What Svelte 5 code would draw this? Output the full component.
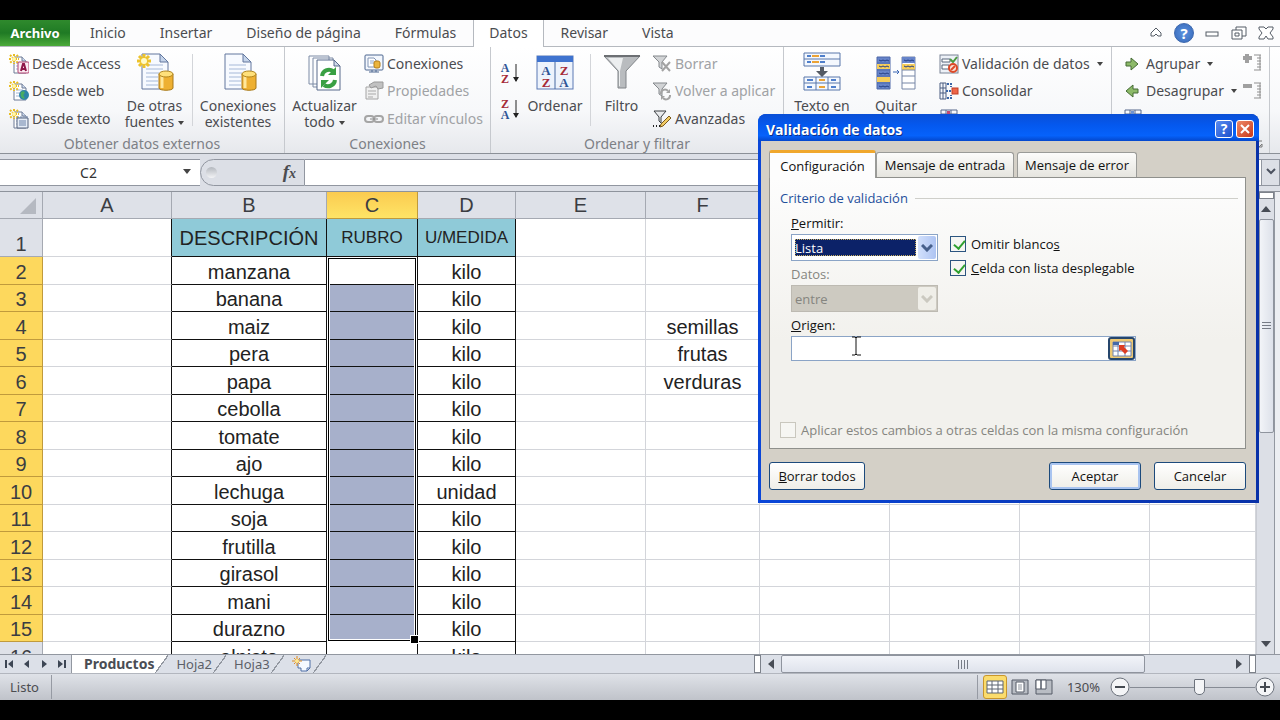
<script lang="ts">
	type Command = { icon: string; label?: string; hint?: string; menu?: boolean; disabled?: boolean };

	const external: Command[] = [
		{ icon: 'access', label: 'Desde Access' },
		{ icon: 'web', label: 'Desde web' },
		{ icon: 'text', label: 'Desde texto' }
	];
	const connections: Command[] = [
		{ icon: 'connections', label: 'Conexiones' },
		{ icon: 'properties', label: 'Propiedades', disabled: true },
		{ icon: 'links', label: 'Editar vínculos', disabled: true }
	];
	const filters: Command[] = [
		{ icon: 'clear', label: 'Borrar', disabled: true },
		{ icon: 'reapply', label: 'Volver a aplicar', disabled: true },
		{ icon: 'advanced', label: 'Avanzadas' }
	];
	const tools: Command[] = [
		{ icon: 'validation', label: 'Validación de datos', menu: true },
		{ icon: 'consolidate', label: 'Consolidar' },
		{ icon: 'whatif', hint: 'Análisis Y si' }
	];
	const outline: Command[] = [
		{ icon: 'group', label: 'Agrupar', menu: true },
		{ icon: 'ungroup', label: 'Desagrupar', menu: true },
		{ icon: 'subtotal', hint: 'Subtotal' }
	];

	const tabs = ['Inicio', 'Insertar', 'Diseño de página', 'Fórmulas', 'Datos', 'Revisar', 'Vista'];
	const columns = ['A', 'B', 'C', 'D', 'E', 'F', 'G', 'H', 'I', 'J'];
	const products = [
		'manzana', 'banana', 'maiz', 'pera', 'papa', 'cebolla', 'tomate', 'ajo',
		'lechuga', 'soja', 'frutilla', 'girasol', 'mani', 'durazno', 'alpiste'
	];
	const lookup: Record<number, string> = { 4: 'semillas', 5: 'frutas', 6: 'verduras' };

	let activeTab = $state('Datos');
	let allow = $state('Lista');
	let source = $state('');
	let ignoreBlank = $state(true);
	let dropdown = $state(true);
	let open = $state(true);

	const rows = products.map((name, i) => ({
		number: i + 2,
		name,
		unit: name === 'lechuga' ? 'unidad' : 'kilo',
		category: lookup[i + 2] ?? ''
	}));
</script>

{#snippet funnel()}
	<path d="M1 2h14l-5 6v7l-3-2V8z" fill="#d2d4d6" stroke="#85898d" />
{/snippet}

{#snippet star()}
	<path d="M5 0v10M0 5h10M1 1l8 8M9 1l-8 8" stroke="#e9bd22" stroke-width="2" stroke-dasharray="2 1" />
	<circle cx="5" cy="5" r="2" fill="#fff6a8" />
{/snippet}

{#snippet page()}
	<path d="M5 3h8l4 4v12H5z" fill="#fff" stroke="#6d7a95" />
	<path d="M7 9h7M7 12h7M7 15h7" stroke="#9fb4d6" />
	<path d="M13 3v4h4" fill="#cfdcf0" stroke="#6d7a95" />
{/snippet}

{#snippet small(name: string)}
	<svg viewBox="0 0 20 20" width="20" height="20" fill="none" aria-hidden="true">
		{#if name === 'access'}
			{@render page()}{@render star()}
			<rect x="9" y="8" width="11" height="11" rx="1" fill="#fbeaf2" stroke="#b0416f" />
			<path d="M12 17l2-7h1l2 7M12 15h5" stroke="#8f1648" stroke-width="2" />
		{:else if name === 'web'}
			{@render page()}{@render star()}
			<circle cx="15" cy="14" r="5" fill="#2e83a8" />
			<path d="M12 11c3-2 5 0 3 2s2 3 0 5c-3-1-4-4-3-7z" fill="#48ac62" />
		{:else if name === 'text'}
			{@render page()}{@render star()}
			<path d="M8 9h11v10H8z" fill="#e5ecf6" stroke="#56657f" />
			<path d="M9 9v-2M12 9v-2M15 9v-2M18 9v-2M10 12h7M10 14h7M10 16h7" stroke="#6d83a8" />
		{:else if name === 'connections'}
			<rect x="1" y="1" width="18" height="15" rx="1" fill="#f3f7fd" stroke="#4d6690" />
			<path d="M4 4h6l2 2v7H4z" fill="#fff" stroke="#8295b5" />
			<path d="M6 7h4M6 9h4" stroke="#8da7d0" />
			<rect x="10" y="7" width="6" height="7" rx="2" fill="#eab43d" stroke="#b47d18" />
			<path d="M5 18h10M8 16v2M12 16v2" stroke="#4d6690" />
		{:else if name === 'properties'}
			<path d="M2 6h12v12H2z" fill="#f0f0f0" stroke="#a4a4a4" />
			<path d="M4 10h8M4 13h8M4 16h5" stroke="#a9a9a9" />
			<path d="M5 4l5-3h9v6l-5 1-2-3-5 2z" fill="#c1c1c1" stroke="#999" />
		{:else if name === 'links'}
			<rect x="1" y="7" width="9" height="6" rx="3" stroke="#a5a5a5" stroke-width="2" />
			<rect x="10" y="7" width="9" height="6" rx="3" stroke="#a5a5a5" stroke-width="2" />
			<path d="M6 10h8" stroke="#888" />
		{:else if name === 'clear'}
			{@render funnel()}
			<path d="M10 8l8 9M18 8l-8 9" stroke="#a3a3a3" stroke-width="2" />
		{:else if name === 'reapply'}
			{@render funnel()}
			<path d="M9 13a4 4 0 0 1 7-3M18 14a4 4 0 0 1-7 3" stroke="#a3a3a3" stroke-width="2" />
			<path d="M18 8v4h-4zM9 19v-4h4z" fill="#a3a3a3" />
		{:else if name === 'advanced'}
			<path d="M2 2h12L9 8v6l-2-2V8z" fill="#e8eaec" stroke="#3b3e42" />
			<path d="M17 7l2 2-8 8-3 1 1-3z" fill="#f2cb63" stroke="#7a5a1c" />
			<path d="M1 17h7" stroke="#222" stroke-dasharray="1 2" stroke-width="2" />
		{:else if name === 'validation'}
			<rect x="1" y="1" width="18" height="18" fill="#edf1f7" stroke="#7b8496" />
			<path d="M3 5h8v3H3zM3 11h7v4H3z" fill="#fff" stroke="#59667d" />
			<path d="M11 5l3 3 4-5" stroke="#4c9a40" stroke-width="2" />
			<circle cx="14" cy="14" r="4" fill="#fbe0d7" stroke="#dc4a28" stroke-width="2" />
			<path d="M12 16l4-4" stroke="#dc4a28" stroke-width="2" />
		{:else if name === 'consolidate'}
			<path d="M1 2h6v16H1zM1 7h6M1 12h6M4 2v16" fill="#f6f8fc" stroke="#4a5c80" />
			<path d="M8 3h4v3M8 17h4v-3M7 10h5" stroke="#3a66a8" stroke-width="2" stroke-dasharray="2 1" />
			<rect x="13" y="7" width="6" height="6" fill="#ed6548" stroke="#c13e26" />
		{:else if name === 'whatif' || name === 'subtotal'}
			<path d="M2 1h16v16H2zM2 5h16M7 1v16M12 1v16" fill="#f6f8fc" stroke="#56688c" />
			<path d="M8 2h3v4H8z" fill={name === 'whatif' ? '#c24972' : '#6f93d0'} />
		{:else if name === 'group'}
			<path d="M3 8h5V4l7 6-7 6v-4H3z" fill="#8cb968" stroke="#446b34" />
		{:else if name === 'ungroup'}
			<path d="M15 8h-5V4l-7 6 7 6v-4h5z" fill="#8cb968" stroke="#446b34" />
		{:else if name === 'expand'}
			<path d="M5 1v9M1 5h9" stroke="#a0a0a0" stroke-width="4" />
			<path d="M12 2h7M15 5h4M15 8h4M15 11h4M15 14h4M12 17h7M18 2v15" stroke="#8f8f8f" />
		{:else if name === 'collapse'}
			<path d="M1 5h9" stroke="#a0a0a0" stroke-width="4" />
			<path d="M12 2h7M15 5h4M15 8h4M15 11h4M15 14h4M12 17h7M18 2v15" stroke="#8f8f8f" />
		{/if}
	</svg>
{/snippet}

{#snippet large(name: string)}
	<svg viewBox="0 0 40 40" width="40" height="40" fill="none" aria-hidden="true">
		{#if name === 'sources' || name === 'existing'}
			<path d="M7 2h18l8 8v27H7z" fill="#f7faff" stroke="#62779e" />
			<path d="M25 2v8h8z" fill="#c5d4ea" stroke="#62779e" />
			<path d="M11 13h17M11 17h17M11 21h13M11 25h12M11 29h12M11 33h12" stroke="#a6b9d8" />
			<path d="M24 22v14c0 3 14 3 14 0V22z" fill="#eeb032" stroke="#a87918" />
			<path d="M27 24v12" stroke="#ffe79b" stroke-width="3" />
			<ellipse cx="31" cy="22" rx="7" ry="3" fill="#ffe07a" stroke="#b3861e" />
			{#if name === 'sources'}
				<path d="M9 2v14M2 9h14M4 4l10 10M14 4L4 14" stroke="#edc32c" stroke-width="3" />
				<circle cx="9" cy="9" r="3" fill="#fffbc8" />
			{/if}
		{:else if name === 'refresh'}
			<path d="M4 4h20v28H4zM8 6h20v29H8z" fill="#fbfcfe" stroke="#7d8ba5" />
			<path d="M12 8h17l6 6v24H12z" fill="#fff" stroke="#586a8c" />
			<path d="M29 8v6h6z" fill="#cfd9ea" stroke="#586a8c" />
			<path d="M17 24a7 7 0 0 1 11-5M30 28a7 7 0 0 1-11 5" stroke="#39a043" stroke-width="4" />
			<path d="M31 15v8h-8zM16 36v-8h8z" fill="#39a043" />
		{:else if name === 'sort'}
			<rect x="2" y="4" width="36" height="33" fill="#edf3fc" stroke="#5a79b4" />
			<rect x="2" y="4" width="36" height="6" fill="#3f73cf" />
			<path d="M20 10v27" stroke="#4668a0" />
			<g class="az" text-anchor="middle" font-size="13">
				<text x="11" y="23" fill="#2f5496">A</text>
				<text x="11" y="35" fill="#a52a37">Z</text>
				<text x="29" y="23" fill="#a52a37">Z</text>
				<text x="29" y="35" fill="#2f5496">A</text>
			</g>
		{:else if name === 'filter'}
			<path d="M2 4h36L24 19v17h-8V19z" fill="#b9bcbf" stroke="#808488" />
			<path d="M6 6h15l-3 13v15h-1V19z" fill="#eceeef" />
			<path d="M2 4h36" stroke="#6c6f73" stroke-width="2" />
		{:else if name === 'split'}
			<path d="M2 1h36v13H2zM2 7h36M2 25h36v13H2zM2 31h36M14 25v13M26 25v13" fill="#f4f8fe" stroke="#5876aa" />
			<path d="M5 4h4M18 4h5M5 10h4M18 10h5M5 28h6M29 28h5M5 35h5M29 35h5" stroke="#4f7fcb" stroke-width="2" />
			<path d="M10 4h7M10 10h7M17 28h6M17 35h6" stroke="#eba336" stroke-width="2" />
			<path d="M18 15h4v4h4l-6 6-6-6h4z" fill="#555b64" />
		{:else if name === 'dedupe'}
			<path d="M1 5h13v32H1z" fill="#6784ca" stroke="#4e68a8" />
			<path d="M1 12h13v5H1zM1 25h13v5H1z" fill="#f6cd5a" />
			<path d="M1 11h13M1 18h13M1 24h13M1 31h13" stroke="#4e68a8" />
			<path d="M3 8l2 1 2-1 2 1 2-1 2 1M3 14l2 1 2-1 2 1 2-1 2 1M3 21l2 1 2-1 2 1 2-1 2 1M3 34l2 1 2-1 2 1 2-1 2 1" stroke="#243f85" />
			<path d="M26 5h13v32H26z" fill="#fff" stroke="#7686a6" />
			<path d="M26 5h13v6H26z" fill="#6784ca" />
			<path d="M26 12h13v6H26z" fill="#f6cd5a" />
			<path d="M26 18h13M26 24h13M26 31h13" stroke="#7686a6" />
			<path d="M28 8l2 1 2-1 2 1 2-1 2 1M28 14l2 1 2-1 2 1 2-1 2 1" stroke="#243f85" />
			<path d="M17 20h6M21 18l2 2-2 2" stroke="#3a66b4" />
		{/if}
	</svg>
{/snippet}

{#snippet sortIcon(top: string, bottom: string)}
	<svg viewBox="0 0 20 24" width="20" height="24" aria-hidden="true">
		<g class="az" text-anchor="middle" font-size="12">
			<text x="5" y="11" fill={top === 'A' ? '#2f5496' : '#a52a37'}>{top}</text>
			<text x="5" y="22" fill={bottom === 'A' ? '#2f5496' : '#a52a37'}>{bottom}</text>
		</g>
		<path d="M16 3v17" stroke="#222" />
		<path d="M13 16h6l-3 5z" fill="#222" />
	</svg>
{/snippet}

{#snippet commands(list: Command[])}
	<div class="stack">
		{#each list as item}
			<button class="small" disabled={item.disabled} aria-label={item.hint}>
				{@render small(item.icon)}
				{#if item.label}<span>{item.label}</span>{/if}
				{#if item.menu}<i class="caret"></i>{/if}
			</button>
		{/each}
	</div>
{/snippet}

{#snippet big(icon: string, first: string, second = '', menu = false)}
	<button class="big {icon}">
		{@render large(icon)}
		<span>{first}</span>
		<span>{second}{#if menu}<i class="caret"></i>{/if}</span>
	</button>
{/snippet}

<main class="excel">
	<nav class="tabs">
		<button class="file">Archivo</button>
		{#each tabs as tab}
			<button class="tab" class:active={tab === activeTab} onclick={() => (activeTab = tab)}>{tab}</button>
		{/each}
		<div class="window-tools">
			<button aria-label="Minimizar la cinta"><svg viewBox="0 0 18 18" width="18" height="18"><path d="M4 9l5-5 5 5v3H11L9 10l-2 2H4z" fill="#fff" stroke="#555c66" /></svg></button>
			<button aria-label="Ayuda" class="help">?</button>
			<button aria-label="Minimizar"><svg viewBox="0 0 18 18" width="18" height="18"><rect x="3" y="8" width="12" height="4" fill="#fff" stroke="#555c66" /></svg></button>
			<button aria-label="Restaurar"><svg viewBox="0 0 18 18" width="18" height="18"><path d="M6 3h10v9H6z" fill="#fff" stroke="#555c66" /><path d="M2 6h10v9H2z" fill="#fff" stroke="#555c66" /><path d="M5 9h4v3H5z" fill="#fff" stroke="#555c66" /></svg></button>
			<button aria-label="Cerrar"><svg viewBox="0 0 18 18" width="18" height="18"><path d="M2 3h5l2 2 2-2h5v2l-3 4 3 4v2h-5l-2-3-2 3H2v-2l3-4-3-4z" fill="#fff" stroke="#555c66" /></svg></button>
		</div>
	</nav>

	<div class="ribbon">
		<section class="group external">
			<div class="content">
				{@render commands(external)}
				{@render big('sources', 'De otras', 'fuentes', true)}
				<hr />
				{@render big('existing', 'Conexiones', 'existentes')}
			</div>
			<h2>Obtener datos externos</h2>
		</section>
		<section class="group links">
			<div class="content">
				{@render big('refresh', 'Actualizar', 'todo', true)}
				{@render commands(connections)}
			</div>
			<h2>Conexiones</h2>
		</section>
		<section class="group sorting">
			<div class="content">
				<div class="sorts">
					<button aria-label="Ordenar de A a Z">{@render sortIcon('A', 'Z')}</button>
					<button aria-label="Ordenar de Z a A">{@render sortIcon('Z', 'A')}</button>
				</div>
				{@render big('sort', 'Ordenar')}
				<hr />
				{@render big('filter', 'Filtro')}
				{@render commands(filters)}
			</div>
			<h2>Ordenar y filtrar</h2>
		</section>
		<section class="group tools">
			<div class="content">
				{@render big('split', 'Texto en')}
				{@render big('dedupe', 'Quitar')}
				{@render commands(tools)}
			</div>
		</section>
		<section class="group outline">
			<div class="content">
				{@render commands(outline)}
				<div class="levels">
					<button aria-label="Mostrar detalle">{@render small('expand')}</button>
					<button aria-label="Ocultar detalle">{@render small('collapse')}</button>
				</div>
			</div>
			<div class="launcher"><svg viewBox="0 0 8 8" width="8" height="8"><path d="M1 7V1h6M4 7h3V4z" fill="none" stroke="#777" /></svg></div>
		</section>
	</div>

	<div class="formula-bar">
		<input class="name-box" aria-label="Cuadro de nombres" value="C2" />
		<button class="names" aria-label="Nombres"><i class="caret"></i></button>
		<div class="fx"><span class="knob"></span><button aria-label="Insertar función">f<sub>x</sub></button></div>
		<input class="formula" aria-label="Barra de fórmulas" />
		<button class="expand" aria-label="Expandir barra"><svg viewBox="0 0 10 8" width="10" height="8"><path d="M1 1l4 4 4-4" fill="none" stroke="#4c5260" stroke-width="2" /></svg></button>
	</div>

	<div class="workspace">
		<div class="sheet">
			<table>
				<colgroup>
					<col class="head" />
					{#each columns as c}<col class="col-{c}" />{/each}
				</colgroup>
				<thead>
					<tr>
						<th class="corner"><svg viewBox="0 0 16 16" width="16" height="16"><path d="M16 0v16H0z" fill="#b5b9c1" /></svg></th>
						{#each columns as c}<th class:picked={c === 'C'}>{c}</th>{/each}
					</tr>
				</thead>
				<tbody>
					<tr class="titles">
						<th>1</th>
						<td class="edge"></td>
						<td class="cell title wide">DESCRIPCIÓN</td>
						<td class="cell title">RUBRO</td>
						<td class="cell title">U/MEDIDA</td>
						<td></td><td></td><td></td><td></td><td></td><td></td>
					</tr>
					{#each rows as row}
						<tr>
							<th class:picked={row.number < 16}>{row.number}</th>
							<td class="edge"></td>
							<td class="cell">{row.name}</td>
							<td class="cell" class:filled={row.number > 2 && row.number < 16}>
								{#if row.number === 2}<div class="selection"></div>{/if}
							</td>
							<td class="cell">{row.unit}</td>
							<td></td>
							<td>{row.category}</td>
							<td></td><td></td><td></td><td></td>
						</tr>
					{/each}
				</tbody>
			</table>
		</div>
		<div class="vscroll">
			<span class="splitter"></span>
			<button aria-label="Arriba"><i class="arrow up"></i></button>
			<div class="thumb"><i></i></div>
			<button aria-label="Abajo"><i class="arrow down"></i></button>
		</div>
	</div>

	<div class="bottom">
		<div class="nav">
			<button aria-label="Primera hoja"><svg viewBox="0 0 10 10" width="10" height="10"><path d="M1 1v8" stroke="#3d4654" stroke-width="2" /><path d="M8 1v8L3 5z" fill="#3d4654" /></svg></button>
			<button aria-label="Hoja anterior"><svg viewBox="0 0 10 10" width="10" height="10"><path d="M7 1v8L2 5z" fill="#3d4654" /></svg></button>
			<button aria-label="Hoja siguiente"><svg viewBox="0 0 10 10" width="10" height="10"><path d="M3 1v8l5-4z" fill="#3d4654" /></svg></button>
			<button aria-label="Última hoja"><svg viewBox="0 0 10 10" width="10" height="10"><path d="M9 1v8" stroke="#3d4654" stroke-width="2" /><path d="M2 1v8l5-4z" fill="#3d4654" /></svg></button>
		</div>
		<button class="sheet-tab current">Productos</button>
		<button class="sheet-tab">Hoja2</button>
		<button class="sheet-tab">Hoja3</button>
		<button class="sheet-tab" aria-label="Insertar hoja">
			<svg viewBox="0 0 20 16" width="20" height="16" fill="none"><path d="M6 4h12v8l-3 3H9v-3H6z" fill="#f5f9ff" stroke="#4f6ea6" /><path d="M18 12h-3v3" stroke="#4f6ea6" /><path d="M5 0v10M0 5h10M2 2l6 6M8 2L2 8" stroke="#e08b1f" /><circle cx="5" cy="5" r="2" fill="#ffe88e" /></svg>
		</button>
		<div class="hscroll">
			<span class="splitter"></span>
			<button aria-label="Izquierda"><i class="arrow left"></i></button>
			<div class="thumb"><i></i></div>
			<button aria-label="Derecha"><i class="arrow right"></i></button>
			<span class="splitter"></span>
		</div>
	</div>

	<footer class="status">
		<span class="ready">Listo</span>
		<div class="views">
			<button class="on" aria-label="Normal"><svg viewBox="0 0 18 14" width="18" height="14"><path d="M1 1h16v12H1zM1 5h16M1 9h16M6 1v12M12 1v12" fill="#fff" stroke="#5d6470" /></svg></button>
			<button aria-label="Diseño de página"><svg viewBox="0 0 18 16" width="18" height="16"><path d="M1 1h16v14H1z" fill="#b9bdc4" stroke="#555b66" /><path d="M5 3h8v10H5z" fill="#fff" stroke="#555b66" /><path d="M7 6h4M7 8h4M7 10h4" stroke="#8d939c" /></svg></button>
			<button aria-label="Vista previa de salto de página"><svg viewBox="0 0 18 16" width="18" height="16"><path d="M1 1h16v14H1z" fill="#b9bdc4" stroke="#555b66" /><path d="M1 1h5v9H1zM6 1h5v9H6z" fill="#fff" stroke="#555b66" /></svg></button>
		</div>
		<span class="percent">130%</span>
		<button class="round" aria-label="Alejar"><svg viewBox="0 0 20 20" width="20" height="20"><circle cx="10" cy="10" r="9" fill="#f4f5f7" stroke="#6c727c" /><path d="M5 10h10" stroke="#454a52" stroke-width="2" /></svg></button>
		<input class="zoom" type="range" aria-label="Zoom" min="0" max="100" value="56" />
		<button class="round" aria-label="Acercar"><svg viewBox="0 0 20 20" width="20" height="20"><circle cx="10" cy="10" r="9" fill="#f4f5f7" stroke="#6c727c" /><path d="M5 10h10M10 5v10" stroke="#454a52" stroke-width="2" /></svg></button>
	</footer>

	{#if open}
		<div class="dialog" role="dialog" aria-labelledby="dialog-title">
			<header>
				<h1 id="dialog-title">Validación de datos</h1>
				<button class="ask" aria-label="Ayuda">?</button>
				<button class="close" aria-label="Cerrar" onclick={() => (open = false)}><svg viewBox="0 0 12 12" width="12" height="12"><path d="M2 2l8 8M10 2l-8 8" stroke="#fff" stroke-width="2" /></svg></button>
			</header>
			<div class="dialog-body">
				<div class="dialog-tabs">
					<button class="active">Configuración</button>
					<button>Mensaje de entrada</button>
					<button>Mensaje de error</button>
				</div>
				<div class="panel">
					<h3>Criterio de validación</h3>
					<div class="criteria">
						<div class="fields">
							<label for="allow"><u>P</u>ermitir:</label>
							<div class="combo">
								<select id="allow" bind:value={allow}>
									<option>Lista</option>
								</select>
								<span><svg viewBox="0 0 12 8" width="12" height="8"><path d="M1 1l5 5 5-5" fill="none" stroke="currentColor" stroke-width="3" /></svg></span>
							</div>
							<label for="data" class="muted">Datos:</label>
							<div class="combo off">
								<select id="data" disabled>
									<option>entre</option>
								</select>
								<span><svg viewBox="0 0 12 8" width="12" height="8"><path d="M1 1l5 5 5-5" fill="none" stroke="currentColor" stroke-width="3" /></svg></span>
							</div>
						</div>
						<div class="checks">
							<label><input type="checkbox" bind:checked={ignoreBlank} /><span>Omitir blanco<u>s</u></span></label>
							<label><input type="checkbox" bind:checked={dropdown} /><span><u>C</u>elda con lista desplegable</span></label>
						</div>
						<div class="origin">
							<label for="source"><u>O</u>rigen:</label>
							<div class="source">
								<input id="source" type="text" bind:value={source} />
								<button aria-label="Contraer diálogo"><svg viewBox="0 0 20 16" width="20" height="16"><path d="M1 1h18v14H1zM1 5h18M1 10h18M6 1v14M13 1v14" fill="#fff" stroke="#7284ad" /><path d="M1 1h6v3H1z" fill="#4669a9" /><path d="M7 4h6l-1 2 4 4-3 3-4-4-2 1z" fill="#dd3d22" /></svg></button>
								<svg class="ibeam" viewBox="0 0 9 20" width="9" height="20"><path d="M0 1h3l1 1 1-1h4M4 2v16M0 19h3l1-1 1 1h4" fill="none" stroke="#111" /></svg>
							</div>
						</div>
					</div>
					<label class="apply muted"><input type="checkbox" disabled /><span>Aplicar estos cambios a otras celdas con la misma configuración</span></label>
				</div>
				<div class="actions">
					<button class="clear"><u>B</u>orrar todos</button>
					<button class="ok">Aceptar</button>
					<button>Cancelar</button>
				</div>
			</div>
		</div>
	{/if}
</main>

<style>
	:global(body) {
		background: #000;
	}

	.excel,
	.excel * {
		box-sizing: border-box;
	}

	.excel {
		position: relative;
		display: flex;
		flex-direction: column;
		height: 100vh;
		padding: 20px 0;
		font: 14px/16px "Noto Sans", sans-serif;
		color: #4b4c50;
		overflow: hidden;
	}

	button,
	input,
	select {
		font: inherit;
		color: inherit;
		margin: 0;
		padding: 0;
		border: 0;
		background: none;
	}

	h1,
	h2,
	h3 {
		margin: 0;
		font: inherit;
	}

	svg {
		display: block;
		flex: none;
	}

	.az {
		font-family: "Liberation Serif", serif;
		font-weight: bold;
	}

	.caret {
		display: inline-block;
		border: 4px solid transparent;
		border-top: 5px solid #444;
		border-bottom: 0;
		vertical-align: middle;
	}

	/* tabs */
	.tabs {
		display: flex;
		flex: none;
		height: 27px;
		background: #fcfcfd;
		border-bottom: 1px solid #b5b9bf;
	}

	.file {
		width: 70px;
		color: #fff;
		font-size: 13px;
		font-weight: bold;
		background: linear-gradient(#2f8a2d, #1f7a24 50%, #4cab3a);
		margin-right: 3px;
	}

	.tab {
		padding: 0 17px 1px;
	}

	.tab.active {
		height: 27px;
		padding: 0 15px 2px;
		background: #fff;
		border: solid #b5b9bf;
		border-width: 0 1px;
	}

	.window-tools {
		display: flex;
		align-items: center;
		gap: 9px;
		margin-left: auto;
		padding-right: 5px;
	}

	.help {
		width: 20px;
		height: 20px;
		border-radius: 50%;
		border: 1px solid #3c68ae;
		background: radial-gradient(#5a92e0, #3768b8);
		color: #fff;
		font-size: 15px;
		font-weight: bold;
	}

	/* ribbon */
	.ribbon {
		display: flex;
		flex: none;
		height: 107px;
		background: linear-gradient(#fff, #f7f8fa 60%, #e6e8ec);
		border-bottom: 1px solid #8b9097;
	}

	.group {
		display: flex;
		flex-direction: column;
		flex: none;
		overflow: hidden;
		border-right: 1px solid #c6c9ce;
	}

	.group h2 {
		text-align: center;
		color: #7d8086;
		height: 18px;
		line-height: 18px;
	}

	.content {
		display: flex;
		flex: 1;
		padding-top: 3px;
		min-height: 0;
	}

	.content hr {
		width: 1px;
		height: 72px;
		margin: 4px 0;
		border: 0;
		background: #d3d5d9;
	}

	.external {
		width: 285px;
	}

	.external .stack {
		width: 108px;
		margin-left: 9px;
	}

	.links {
		width: 206px;
	}

	.sorting {
		width: 293px;
	}

	.tools {
		width: 328px;
	}

	.outline {
		width: 158px;
	}

	.stack {
		display: flex;
		flex-direction: column;
	}

	.small {
		display: flex;
		align-items: center;
		height: 27px;
		gap: 3px;
		white-space: nowrap;
	}

	.small:last-child {
		height: 29px;
	}

	.small:disabled {
		color: #a0a2a5;
	}

	.big {
		display: flex;
		flex-direction: column;
		align-items: center;
		padding-top: 2px;
		white-space: nowrap;
	}

	.big svg {
		margin-bottom: 6px;
	}

	.big span {
		height: 16px;
	}

	.big .caret,
	.small .caret {
		border-width: 4px 3px 0;
		margin-left: 4px;
	}

	.big.sources {
		width: 75px;
	}

	.big.existing {
		width: 90px;
	}

	.big.refresh {
		width: 79px;
	}

	.big.sort {
		width: 70px;
	}

	.big.filter {
		width: 61px;
	}

	.big.split {
		width: 76px;
	}

	.big.dedupe {
		width: 72px;
	}

	.tools .stack {
		margin-left: 7px;
	}

	.sorts {
		display: flex;
		flex-direction: column;
		gap: 12px;
		padding: 11px 0 0 9px;
	}

	.outline .content {
		justify-content: space-between;
		padding: 3px 7px 0 11px;
	}

	.levels {
		display: flex;
		flex-direction: column;
		gap: 8px;
		padding-top: 3px;
	}

	.launcher {
		display: flex;
		align-items: center;
		justify-content: flex-end;
		height: 18px;
		padding-right: 6px;
	}

	/* formula bar */
	.formula-bar {
		display: flex;
		flex: none;
		align-items: center;
		height: 38px;
		padding: 5px 0 6px;
		background: #dcdfe6;
		border-bottom: 1px solid #8e939c;
	}

	.name-box,
	.names,
	.formula {
		height: 27px;
		background: #fff;
		border: solid #9196a0;
		border-width: 1px 0;
	}

	.name-box {
		width: 177px;
		text-align: center;
		color: #333;
	}

	.names {
		width: 23px;
		padding: 0 3px 3px 0;
	}

	.fx {
		display: flex;
		align-items: center;
		justify-content: space-between;
		width: 105px;
		height: 27px;
		padding: 0 8px 0 5px;
		border: 1px solid #9196a0;
		border-radius: 14px 0 0 14px;
	}

	.knob {
		width: 11px;
		height: 11px;
		border-radius: 50%;
		background: linear-gradient(#b3b7be, #f3f4f6);
	}

	.fx button {
		font: italic bold 19px/20px "Liberation Serif", serif;
	}

	.fx sub {
		font-size: 14px;
		line-height: 10px;
		vertical-align: baseline;
	}

	.formula {
		flex: 1;
	}

	.expand {
		display: grid;
		place-items: center;
		width: 19px;
		height: 27px;
		border: 1px solid #9196a0;
	}

	/* sheet */
	.workspace {
		display: flex;
		flex: 1;
		min-height: 0;
		background: #dcdfe6;
	}

	.sheet {
		flex: 1;
		min-width: 0;
		overflow: hidden;
		background: #fff;
	}

	table {
		width: 100%;
		table-layout: fixed;
		border-spacing: 0;
		font: 20px/24px "Liberation Sans", Arial, sans-serif;
		color: #222;
	}

	.head {
		width: 43px;
	}

	.col-A {
		width: 129px;
	}

	.col-B {
		width: 155px;
	}

	.col-C {
		width: 91px;
	}

	.col-D {
		width: 98px;
	}

	.col-E,
	.col-G,
	.col-H,
	.col-I {
		width: 130px;
	}

	.col-F {
		width: 114px;
	}

	th,
	td {
		height: 27px;
		padding: 0;
		border: solid #d3d5da;
		border-width: 0 1px 1px 0;
		text-align: center;
		white-space: nowrap;
	}

	tbody th,
	tbody td {
		padding-top: 2px;
	}

	tbody tr:nth-child(even) > * {
		height: 28px;
	}

	tbody tr.titles > * {
		height: 38px;
		padding-top: 0;
	}

	.titles th {
		vertical-align: bottom;
	}

	th {
		font-weight: normal;
		color: #3b3d42;
		background: #dee1e8;
		border-color: #a5a9b2;
	}

	th.picked {
		background: #fdd85d;
		border-color: #c09a3c;
	}

	thead th.picked {
		background: linear-gradient(#fbcb50, #fee466);
	}

	.corner svg {
		margin: 2px 6px 0 auto;
	}

	.cell,
	.edge {
		border-right-color: #111;
	}

	.cell {
		border-bottom-color: #111;
		position: relative;
	}

	.title {
		background: #8fcad8;
		font-size: 17px;
	}

	.title.wide {
		font-size: 20px;
	}

	.filled {
		background: #a7b0cb;
	}

	/* spans C2:C15, fourteen rows of 27 and 28 pixels */
	.selection {
		position: absolute;
		z-index: 1;
		left: 1px;
		top: 1px;
		width: calc(100% - 2px);
		height: 383px;
		border: 1px solid #000;
		box-shadow: 0 0 0 1px #fff, inset 0 0 0 1px #fff;
	}

	.selection::after {
		content: "";
		position: absolute;
		right: -4px;
		bottom: -4px;
		width: 7px;
		height: 7px;
		background: #000;
		border: 1px solid #fff;
	}

	/* scroll bars */
	.vscroll {
		display: flex;
		flex-direction: column;
		align-items: center;
		width: 24px;
		padding: 0 7px 0 2px;
		border-left: 1px solid #c9ccd3;
		background: linear-gradient(90deg, transparent 17px, #9297a0 17px 18px, #eceef2 18px);
	}

	.vscroll button {
		height: 20px;
	}

	.vscroll .splitter {
		width: 15px;
		height: 7px;
		background: #fff;
		border: 1px solid #7d828b;
	}

	.vscroll .thumb {
		display: grid;
		place-items: center;
		width: 15px;
		height: 214px;
		margin-bottom: auto;
		border: 1px solid #8f949e;
		border-radius: 2px;
		background: linear-gradient(90deg, #f2f4f8, #dde1ea);
	}

	.vscroll .thumb i {
		width: 9px;
		height: 8px;
		background: repeating-linear-gradient(#777c86 0 1px, transparent 1px 3px);
	}

	.arrow {
		display: block;
		border: 5px solid transparent;
	}

	.up {
		border-top: 0;
		border-bottom: 6px solid #474c55;
	}

	.down {
		border-bottom: 0;
		border-top: 6px solid #474c55;
	}

	.left {
		border-left: 0;
		border-right: 6px solid #474c55;
	}

	.right {
		border-right: 0;
		border-left: 6px solid #474c55;
	}

	/* sheet tabs */
	.bottom {
		display: flex;
		flex: none;
		height: 20px;
		background: #dce0e8;
		border-top: 1px solid #9297a0;
		border-bottom: 1px solid #b2b6be;
	}

	.nav {
		display: flex;
		justify-content: space-around;
		align-items: center;
		width: 72px;
		padding: 0 2px;
		border-right: 1px solid #9297a0;
	}

	.sheet-tab {
		position: relative;
		height: 18px;
		padding: 0 8px 0 14px;
		font-size: 13px;
		color: #5c6068;
	}

	.sheet-tab::after {
		content: "";
		position: absolute;
		right: -6px;
		top: 0;
		height: 18px;
		width: 13px;
		background: linear-gradient(126deg, transparent 48%, #9297a0 48% 54%, transparent 54%);
	}

	.sheet-tab.current {
		padding: 0 8px 0 12px;
		background: #fff;
		font-size: 14px;
		font-weight: bold;
		color: #4a4d54;
	}

	.sheet-tab.current::after {
		background: linear-gradient(126deg, #fff 48%, #9297a0 48% 54%, #dce0e8 54%);
	}

	.hscroll {
		display: flex;
		align-items: center;
		width: 502px;
		margin: 0 24px 0 auto;
	}

	.hscroll .splitter {
		width: 7px;
		height: 18px;
		background: #fff;
		border: 1px solid #7d828b;
	}

	.hscroll button {
		padding: 0 7px;
	}

	.hscroll .thumb {
		display: grid;
		place-items: center;
		width: 364px;
		height: 18px;
		margin-right: auto;
		border: 1px solid #8f949e;
		border-radius: 2px;
		background: linear-gradient(#f2f4f9, #dfe3ec);
	}

	.hscroll .thumb i {
		width: 10px;
		height: 9px;
		background: repeating-linear-gradient(90deg, #777c86 0 1px, transparent 1px 3px);
	}

	/* status bar */
	.status {
		display: flex;
		flex: none;
		align-items: center;
		height: 26px;
		padding-right: 5px;
		font-size: 13px;
		background: linear-gradient(#dfe2e8, #c0c3ca);
	}

	.ready {
		width: 52px;
		padding-left: 10px;
		border-right: 1px solid #969aa3;
		line-height: 24px;
	}

	.views {
		display: flex;
		align-items: center;
		gap: 3px;
		margin-left: auto;
		padding-left: 5px;
		border-left: 1px solid #969aa3;
	}

	.views button {
		display: grid;
		place-items: center;
		width: 21px;
		height: 24px;
	}

	.views .on {
		width: 24px;
		border: 1px solid #c9962c;
		border-radius: 3px;
		background: #fbdc6c;
	}

	.percent {
		padding: 0 10px 0 12px;
	}

	.zoom {
		appearance: none;
		width: 125px;
		height: 20px;
		background: linear-gradient(#868b94, #868b94) no-repeat center / 100% 1px;
	}

	.zoom::-webkit-slider-thumb {
		appearance: none;
		width: 11px;
		height: 16px;
		border: 1px solid #6c727c;
		border-radius: 1px 1px 5px 5px;
		background: #f4f5f7;
	}

	/* dialog */
	.dialog {
		position: absolute;
		z-index: 2;
		top: 114px;
		right: 21px;
		width: 501px;
		padding: 0 3px 3px;
		border-radius: 8px 8px 0 0;
		background: linear-gradient(90deg, #0a46d8, #0831a8);
		color: #111;
		font: 13px/16px "Open Sans", sans-serif;
	}

	.dialog header {
		display: flex;
		align-items: center;
		gap: 3px;
		height: 27px;
		margin: 0 -3px;
		padding: 2px 5px 0 8px;
		border-radius: 8px 8px 0 0;
		background: linear-gradient(#0a4fd6, #0458ee 40%, #0662fb 80%, #0447cc);
	}

	.dialog h1 {
		flex: 1;
		padding-top: 2px;
		font: bold 14px/16px "Open Sans", sans-serif;
		color: #fff;
		text-shadow: 1px 1px #0a2f8a;
	}

	.ask,
	.close {
		display: grid;
		place-items: center;
		width: 18px;
		height: 18px;
		border: 1px solid #fff;
		border-radius: 3px;
		background: linear-gradient(135deg, #5a8cf0, #1c4fcc);
		color: #fff;
		font-weight: bold;
		font-size: 14px;
	}

	.close {
		background: linear-gradient(135deg, #ee8a68, #c9381a);
	}

	.dialog-body {
		padding: 9px 10px 10px 8px;
		background: #d4d0c7;
	}

	.dialog-tabs {
		display: flex;
		align-items: flex-end;
		gap: 3px;
	}

	.dialog-tabs button {
		height: 25px;
		width: 120px;
		border: 1px solid #9a9b98;
		border-bottom: 0;
		border-radius: 3px 3px 0 0;
		background: linear-gradient(#fcfcfb, #e6e5df);
	}

	.dialog-tabs button:nth-child(2) {
		width: 138px;
		margin-left: -3px;
	}

	.dialog-tabs .active {
		position: relative;
		width: 107px;
		height: 28px;
		margin-bottom: -1px;
		border-top: 3px solid #f0a72c;
		background: #fdfdfd;
	}

	.panel {
		padding: 12px 22px 10px 10px;
		border: 1px solid #8f908c;
		background: linear-gradient(#fdfdfd, #f2f1ed 60%);
	}

	.panel h3 {
		display: flex;
		align-items: center;
		gap: 7px;
		color: #1f4f9c;
	}

	.panel h3::after {
		content: "";
		flex: 1;
		height: 1px;
		margin-right: -15px;
		background: #cfcfca;
	}

	.criteria {
		display: grid;
		grid-template-columns: 147px 1fr;
		column-gap: 12px;
		padding: 9px 0 0 11px;
	}

	.fields > label,
	.origin > label {
		display: block;
		height: 16px;
	}

	.fields > .muted {
		margin-top: 5px;
	}

	.muted {
		color: #85857f;
	}

	.combo {
		display: flex;
		height: 27px;
		margin-top: 3px;
		padding: 1px;
		background: #fff;
		border: 1px solid #8ba4c6;
	}

	.combo select {
		appearance: none;
		flex: 1;
		height: 17px;
		margin: 3px 2px;
		background: #0c2268;
		outline: 1px dotted #c8b060;
		outline-offset: -1px;
		color: #fff;
	}

	.combo span {
		display: grid;
		place-items: center;
		width: 18px;
		border-radius: 2px;
		background: linear-gradient(90deg, #d2e0fc, #aec4f2);
		color: #47608c;
	}

	.combo.off,
	.combo.off select {
		background: #cdcac1;
		border-color: #bdbab2;
		outline: 0;
		color: #85857f;
		opacity: 1;
	}

	.combo.off span {
		background: #efeee8;
		color: #cbc9c0;
	}

	.checks {
		display: flex;
		flex-direction: column;
		gap: 8px;
		padding-top: 21px;
	}

	.checks label,
	.apply {
		display: flex;
		align-items: center;
		gap: 5px;
		white-space: nowrap;
	}

	.dialog input[type="checkbox"] {
		appearance: none;
		flex: none;
		width: 16px;
		height: 16px;
		border: 1px solid #2c5580;
		background: #f6f6f3;
	}

	.dialog input[type="checkbox"]:disabled {
		border-color: #c9c7be;
	}

	.dialog input[type="checkbox"]:checked::before {
		content: "";
		display: block;
		width: 5px;
		height: 9px;
		margin: 1px 0 0 5px;
		border: solid #2fa02f;
		border-width: 0 2px 2px 0;
		transform: rotate(40deg);
	}

	.origin {
		grid-column: 1 / -1;
		padding-top: 5px;
	}

	.source {
		position: relative;
		display: flex;
		width: 345px;
		height: 25px;
		margin-top: 3px;
		border: 1px solid #8ba4c6;
		background: #fff;
	}

	.source input {
		flex: 1;
	}

	.source button {
		display: grid;
		place-items: center;
		width: 27px;
		border: 2px solid #26466c;
		border-radius: 3px;
		background: #edc872;
	}

	.ibeam {
		position: absolute;
		left: 60px;
		top: -1px;
	}

	.apply {
		margin-top: 61px;
	}

	.actions {
		display: flex;
		gap: 13px;
		margin-top: 13px;
	}

	.actions button {
		width: 92px;
		height: 28px;
		border: 1px solid #1c4a7c;
		border-radius: 3px;
		background: linear-gradient(#fff, #efeee8);
	}

	.actions .clear {
		width: 96px;
		margin-right: auto;
	}

	.actions .ok {
		box-shadow: inset 0 0 0 2px #a9c4f0;
	}
</style>
